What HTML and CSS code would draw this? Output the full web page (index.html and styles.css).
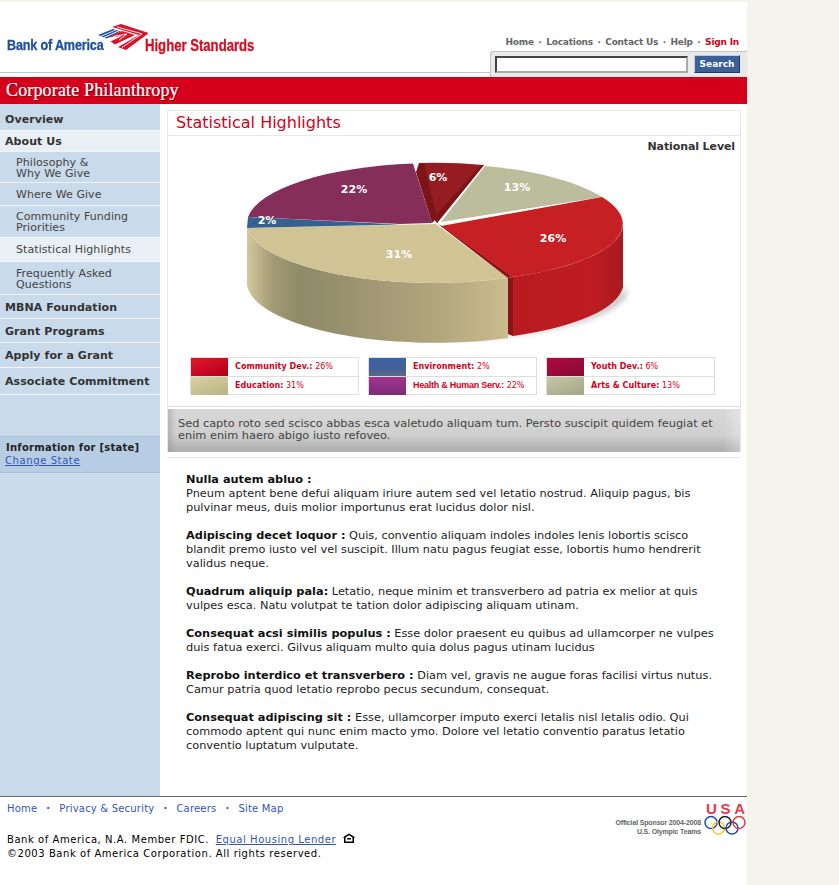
FILE: index.html
```html
<!DOCTYPE html>
<html lang="en">
<head>
<meta charset="utf-8">
<title>Statistical Highlights</title>
<link rel="stylesheet" href="styles.css">
</head>
<body>
<div class="page">
  <header class="header">
    <div class="brand">
      <span class="brand-name">Bank of America</span>
      <svg class="flag" width="52" height="32" viewBox="96 22 52 32">
        <g fill="#1f4f9e">
          <polygon points="98,35 113,29 115.500,29.700 100.500,36.100"/>
          <polygon points="101.500,36.500 116.500,30 118.500,30.600 103.500,37.300"/>
          <polygon points="104.500,37.700 119.500,31 121,31.600 106.500,38.500"/>
        </g>
        <g fill="#d9132a">
          <polygon points="112,27 121,24 149,33 126,50 118,47 139,35"/>
          <polygon points="108,37.500 122,31 135,35 115,44.500 110.500,41.500 122,36"/>
        </g>
        <g fill="none" stroke="#fff" stroke-width=".9">
          <polyline points="117,27 142,33.800 122,47.500"/>
          <polyline points="113,36.500 127,34 119,40"/>
        </g>
      </svg>
      <span class="brand-tag">Higher Standards</span>
    </div>
    <div class="tools">
      <nav class="toplinks">
        <a class="toplink">Home</a><span class="dot">·</span>
        <a class="toplink">Locations</a><span class="dot">·</span>
        <a class="toplink">Contact Us</a><span class="dot">·</span>
        <a class="toplink">Help</a><span class="dot">·</span>
        <a class="toplink signin">Sign In</a>
      </nav>
      <form class="search">
        <input class="search-input" type="text" aria-label="Search">
        <button class="search-btn" type="button">Search</button>
      </form>
    </div>
  </header>
  <div class="band"><span class="band-title">Corporate Philanthropy</span></div>
  <div class="body">
    <aside class="side">
      <a class="nav top r-overview">Overview</a>
      <a class="nav top active r-about">About Us</a>
      <a class="nav sub r-phil">Philosophy &amp;<br>Why We Give</a>
      <a class="nav sub r-where">Where We Give</a>
      <a class="nav sub r-comm">Community Funding<br>Priorities</a>
      <a class="nav sub active r-stat">Statistical Highlights</a>
      <a class="nav sub r-freq">Frequently Asked<br>Questions</a>
      <a class="nav top r-mbna">MBNA Foundation</a>
      <a class="nav top r-grant">Grant Programs</a>
      <a class="nav top r-apply">Apply for a Grant</a>
      <a class="nav top r-assoc">Associate Commitment</a>
      <div class="state">
        <div class="state-title">Information for [state]</div>
        <a class="state-link">Change State</a>
      </div>
    </aside>
    <main class="main">
      <section class="card">
        <h1 class="title">Statistical Highlights</h1>
        <div class="level">National Level</div>
        <svg class="pie" width="572" height="200" viewBox="168 152 572 200">
          <defs>
            <linearGradient id="tanSide" gradientUnits="userSpaceOnUse" x1="247" y1="0" x2="508" y2="0">
              <stop offset="0" stop-color="#d2c89c"/>
              <stop offset=".1" stop-color="#a29a74"/>
              <stop offset=".2" stop-color="#8f8a68"/>
              <stop offset=".4" stop-color="#9b9370"/>
              <stop offset=".7" stop-color="#b0a47c"/>
              <stop offset="1" stop-color="#c9bc8e"/>
            </linearGradient>
            <linearGradient id="redSide" gradientUnits="userSpaceOnUse" x1="513" y1="0" x2="623" y2="0">
              <stop offset="0" stop-color="#b91b21"/>
              <stop offset=".75" stop-color="#bc1c22"/>
              <stop offset="1" stop-color="#a81a1e"/>
            </linearGradient>
            <filter id="soft" x="-10%" y="-30%" width="120%" height="160%">
              <feGaussianBlur stdDeviation="3"/>
            </filter>
          </defs>
          <path d="M262,292 A186,58 0 0 0 626,286 L626,296 A186,52 0 0 1 262,298 Z" fill="#999" opacity=".7" filter="url(#soft)"/>
          <path d="M247,228 A188,61 0 0 0 508,278 L508,338 A188,61 0 0 1 247,285 Z" fill="url(#tanSide)"/>
          <path d="M623,222 A183,58 0 0 1 513,277 L513,336 A183,58 0 0 0 623,287 Z" fill="url(#redSide)"/>
          <path d="M508,278 L513,277 L513,336 L508,334 Z" fill="#8c1418"/>
          <path d="M436,224 L247,228 A188,61 0 0 0 508,278 Z" fill="#d0c394"/>
          <path d="M248,217 L400,224.500 L247,228 Z" fill="#35608f"/>
          <path d="M248,217 A188,61 0 0 1 413,163.500 L432,223 L400,224 Z" fill="#862e5a"/>
          <path d="M419,163 A188,61 0 0 1 484,165 L437,223 Z" fill="#951c20"/>
          <path d="M419,163 L424,163 L437,218 L432,223 L416,172 Z" fill="#7d1518"/>
          <path d="M484,165 L437,223 L433,218 L481,165 Z" fill="#7d1518"/>
          <path d="M441,222 L485,166 A188,61 0 0 1 602,197 Z" fill="#bcbd9d"/>
          <path d="M438,224 L508,278 L513,277 L442,226 Z" fill="#8c1418"/>
          <path d="M441,226 L602,197 A183,58 0 0 1 513,277 Z" fill="#c62024"/>
          <g class="pct">
            <text x="438" y="181" text-anchor="middle">6%</text>
            <text x="354" y="193" text-anchor="middle">22%</text>
            <text x="517" y="191" text-anchor="middle">13%</text>
            <text x="267" y="224" text-anchor="middle">2%</text>
            <text x="399" y="258" text-anchor="middle">31%</text>
            <text x="553" y="242" text-anchor="middle">26%</text>
          </g>
        </svg>
        <div class="legend">
          <div class="lg">
            <div class="lg-row"><span class="sw sw-red"></span><span class="lg-text"><b>Community Dev.:</b> 26%</span></div>
            <div class="lg-row"><span class="sw sw-tan"></span><span class="lg-text"><b>Education:</b> 31%</span></div>
          </div>
          <div class="lg">
            <div class="lg-row"><span class="sw sw-blue"></span><span class="lg-text"><b>Environment:</b> 2%</span></div>
            <div class="lg-row"><span class="sw sw-purple"></span><span class="lg-text tight"><b>Health &amp; Human Serv.:</b> 22%</span></div>
          </div>
          <div class="lg">
            <div class="lg-row"><span class="sw sw-crimson"></span><span class="lg-text"><b>Youth Dev.:</b> 6%</span></div>
            <div class="lg-row"><span class="sw sw-sage"></span><span class="lg-text"><b>Arts &amp; Culture:</b> 13%</span></div>
          </div>
        </div>
        <p class="note">Sed capto roto sed scisco abbas esca valetudo aliquam tum. Persto suscipit quidem feugiat et<br>enim enim haero abigo iusto refoveo.</p>
      </section>
      <article class="article">
        <p class="para"><b>Nulla autem abluo :</b><br>Pneum aptent bene defui aliquam iriure autem sed vel letatio nostrud. Aliquip pagus, bis<br>pulvinar meus, duis molior importunus erat lucidus dolor nisl.</p>
        <p class="para"><b>Adipiscing decet loquor :</b> Quis, conventio aliquam indoles indoles lenis lobortis scisco<br>blandit premo iusto vel vel suscipit. Illum natu pagus feugiat esse, lobortis humo hendrerit<br>validus neque.</p>
        <p class="para"><b>Quadrum aliquip pala:</b> Letatio, neque minim et transverbero ad patria ex melior at quis<br>vulpes esca. Natu volutpat te tation dolor adipiscing aliquam utinam.</p>
        <p class="para"><b>Consequat acsi similis populus :</b> Esse dolor praesent eu quibus ad ullamcorper ne vulpes<br>duis fatua exerci. Gilvus aliquam multo quia dolus pagus utinam lucidus</p>
        <p class="para"><b>Reprobo interdico et transverbero :</b> Diam vel, gravis ne augue foras facilisi virtus nutus.<br>Camur patria quod letatio reprobo pecus secundum, consequat.</p>
        <p class="para"><b>Consequat adipiscing sit :</b> Esse, ullamcorper imputo exerci letalis nisl letalis odio. Qui<br>commodo aptent qui nunc enim macto ymo. Dolore vel letatio conventio paratus letatio<br>conventio luptatum vulputate.</p>
      </article>
    </main>
  </div>
  <footer class="footer">
    <div class="foot-left">
      <nav class="foot-links">
        <a class="foot-link">Home</a><span class="foot-dot">·</span>
        <a class="foot-link">Privacy &amp; Security</a><span class="foot-dot">·</span>
        <a class="foot-link">Careers</a><span class="foot-dot">·</span>
        <a class="foot-link">Site Map</a>
      </nav>
      <p class="legal">Bank of America, N.A. Member FDIC. <a class="legal-link">Equal Housing Lender</a>
        <svg class="house" width="14" height="11" viewBox="0 0 14 11"><path d="M7,.5 L13.500,4.500 L12,4.500 L12,10 L2,10 L2,4.500 L.5,4.500 Z M3.500,4.500 L3.500,8.500 L10.500,8.500 L10.500,4.500 L7,2.300 Z" fill="#000" fill-rule="evenodd"/><rect x="5" y="5" width="4" height="1.500" fill="#000"/></svg><br>©2003 Bank of America Corporation. All rights reserved.</p>
    </div>
    <div class="sponsor">
      <div class="sponsor-text">Official Sponsor 2004-2008<br>U.S. Olympic Teams</div>
      <div class="usa">
        <div class="usa-letters"><span>U</span><span>S</span><span>A</span></div>
        <svg class="rings" width="42" height="20" viewBox="0 0 42 20" fill="none" stroke-width="1.500">
          <circle cx="7" cy="7.500" r="6" stroke="#1f4f9e"/>
          <circle cx="14.500" cy="13" r="6" stroke="#f5c92c"/>
          <circle cx="21" cy="7.500" r="6" stroke="#222"/>
          <circle cx="28" cy="13" r="6" stroke="#1f4f9e"/>
          <circle cx="35" cy="7.500" r="6" stroke="#e23a4a"/>
        </svg>
      </div>
    </div>
  </footer>
</div>
</body>
</html>
```
FILE: styles.css
```css
* { box-sizing: border-box; }
html, body { margin: 0; padding: 0; }
body {
  background: #f4f4ec;
  padding-top: 2px;
  font-family: "DejaVu Sans", Verdana, sans-serif;
  font-size: 11px;
  color: #222;
}
.page { width: 747px; background: #fff; }

.header { height: 75px; display: flex; justify-content: space-between; background: linear-gradient(#fff 70px, #c4c4c4 70px, #c4c4c4 71px, #fff 71px); }
.brand { display: flex; align-items: flex-start; padding: 21px 0 0 7px; }
.brand-name { font-family: "Liberation Sans", sans-serif; font-weight: 700; font-size: 14.500px; line-height: 15px; color: #1f4f9e; -webkit-text-stroke: .3px #1f4f9e; margin-top: 15px; width: 89px; white-space: nowrap; letter-spacing: -.2px; transform: scaleX(.87); transform-origin: left center; }
.flag { display: block; margin-top: -1px; }
.brand-tag { font-family: "Liberation Sans", sans-serif; font-weight: 700; font-size: 16px; line-height: 16px; color: #d40f24; -webkit-text-stroke: .3px #d40f24; margin: 15px 0 0 -3px; white-space: nowrap; transform: scaleX(.82); transform-origin: left center; }
.tools { width: 257px; display: flex; flex-direction: column; }
.toplinks { display: flex; justify-content: flex-end; align-items: center; height: 49px; padding: 31px 8px 0 0; font-size: 9px; font-weight: 700; color: #666; line-height: 20px; letter-spacing: -.2px; }
.toplink { color: #666; }
.signin { color: #d40019; }
.dot { margin: 0 4.500px; }
.search {
  height: 26px;
  display: flex;
  align-items: flex-start;
  gap: 6px;
  padding: 4px 7px 0 4px;
  background: #e9e9e9;
  border-top: 1px solid #c4c4c4;
  border-left: 1px solid #c4c4c4;
  border-top-left-radius: 3px;
}
.search-input { width: 193px; height: 17px; padding: 0; border: 2px solid; border-color: #444 #aaa #aaa #444; background: #fff; margin: 0; }
.search-btn { width: 46px; height: 18px; padding: 0; margin: -1px 0 0; background: #3b5f96; border: 1px solid; border-color: #b9d0e8 #1d3a68 #1d3a68 #b9d0e8; color: #fff; font: 700 9px/14px "DejaVu Sans", sans-serif; }

.band { height: 27px; background: #d5001c; padding-left: 6px; }
.band-title { font-family: "Liberation Serif", serif; font-size: 18px; line-height: 27px; color: #fff; -webkit-text-stroke: .2px #fff; text-shadow: 1px 1px 1px #7a0010; letter-spacing: .15px; }

.body { display: flex; }
.side { width: 160px; flex: none; background: #c9daea; color: #333; }
.nav { display: block; border-bottom: 1px solid #f0f5f9; line-height: 11px; white-space: nowrap; }
.top { padding-left: 5px; font-weight: 700; color: #333; letter-spacing: .08px; }
.sub { padding-left: 16px; color: #444; letter-spacing: .08px; }
.active { background: #e8f0f5; }
.r-overview { padding-top: 10px; height: 27px; }
.r-about { padding-top: 5px; height: 21px; }
.r-phil { padding-top: 5px; height: 31px; }
.r-where { padding-top: 6px; height: 23px; }
.r-comm { padding-top: 5px; height: 32px; }
.r-stat { padding-top: 6px; height: 24px; }
.r-freq { padding-top: 6px; height: 33px; }
.r-mbna { padding-top: 7px; height: 24px; }
.r-grant { padding-top: 7px; height: 24px; }
.r-apply { padding-top: 7px; height: 25px; }
.r-assoc { padding-top: 8px; height: 27px; }
.state { margin-top: 41px; height: 37px; padding: 4px 0 0 6px; background: #b7cde4; border-top: 1px solid #a8c0da; border-bottom: 1px solid #a8c0da; font-size: 10px; line-height: 13px; }
.state-title { font-weight: 700; color: #222; letter-spacing: .25px; }
.state-link { display: block; margin-left: -1px; color: #3355bb; text-decoration: underline; letter-spacing: .6px; }

.main { flex: 1; padding: 6px 6px 0 7px; }
.card { border: 1px solid #e8e8e8; border-bottom: 0; }
.title { margin: 0; height: 25px; padding-left: 8px; font-size: 16px; font-weight: 400; line-height: 23px; color: #d40019; border-bottom: 1px solid #e8e8e8; }
.level { height: 16px; padding: 4px 5px 0 0; text-align: right; font-weight: 700; line-height: 13px; color: #333; letter-spacing: -.1px; }
.pie { display: block; }
.pct { font: 700 11px "DejaVu Sans", sans-serif; fill: #fff; }
.legend { display: flex; gap: 9px; padding: 5px 0 0 22px; height: 55px; border-bottom: 1px solid #ddd; }
.lg { width: 169px; height: 38px; border: 1px solid #ddd; }
.lg-row { display: flex; align-items: center; height: 18px; }
.lg-row + .lg-row { border-top: 1px solid #ddd; height: 19px; }
.sw { width: 37px; height: 100%; flex: none; }
.sw-red { background: linear-gradient(160deg, #e0172e, #b00018); }
.sw-tan { background: linear-gradient(160deg, #d8d3a4, #b9b283); }
.sw-blue { background: linear-gradient(#3c64a0, #44609a 60%, #5a6a80); }
.sw-purple { background: linear-gradient(#9e3590, #812a78); }
.sw-crimson { background: linear-gradient(160deg, #b00a42, #870a32); }
.sw-sage { background: linear-gradient(160deg, #c6c8a4, #a2a488); }
.lg-text { padding: 0 0 2px 7px; font-size: 8px; color: #d40019; white-space: nowrap; }
.lg-text b { letter-spacing: .05px; }
.tight b { font: 700 9px "Liberation Sans", sans-serif; letter-spacing: -.25px; }
.note { margin: 2px 0 0; height: 43px; padding: 8px 0 0 10px; font-size: 11.330px; line-height: 12px; color: #444; white-space: nowrap; background: linear-gradient(90deg, rgba(150,150,150,.5), rgba(150,150,150,0) 8px, rgba(255,255,255,0) 97%, rgba(255,255,255,.3)), linear-gradient(#d8d8d8, #cfcfcf 60%, #b4b4b4 90%, #b0b0b0); }

.article { margin-top: 5px; border-top: 1px solid #e8e8e8; padding: 14px 0 0 19px; font-size: 11.330px; color: #222; line-height: 14px; white-space: nowrap; height: 339px; }
.para { margin: 0 0 14px; }
.para:last-child { margin-bottom: 0; }
.para b { color: #111; }

.footer { position: relative; display: flex; justify-content: space-between; height: 89px; border-top: 1px solid #666; background: #fff; }
.foot-left { padding: 5px 0 0 7px; font-size: 10px; }
.foot-links { display: flex; align-items: center; line-height: 13px; color: #3355bb; letter-spacing: .2px; }
.foot-link { color: #3355bb; }
.foot-dot { color: #555; font-weight: 700; margin: 0 9px 0 9px; }
.legal { margin: 18px 0 0; line-height: 14px; color: #000; letter-spacing: .55px; }
.legal-link { margin-left: 3px; color: #3355bb; text-decoration: underline; }
.house { vertical-align: -1px; margin-left: 2px; }
.sponsor { display: flex; align-items: flex-start; gap: 3px; padding: 6px 1px 0 0; }
.sponsor-text { margin-top: 15px; text-align: right; font: 700 7px/9px "Liberation Sans", sans-serif; color: #666; letter-spacing: -.15px; }
.usa { width: 42px; }
.usa-letters { display: flex; justify-content: space-between; padding: 0 1px 0 2px; height: 11px; font: 700 15px/12px "Liberation Sans", sans-serif; color: #e23a4a; }
.rings { display: block; margin-top: 1px; }
```
